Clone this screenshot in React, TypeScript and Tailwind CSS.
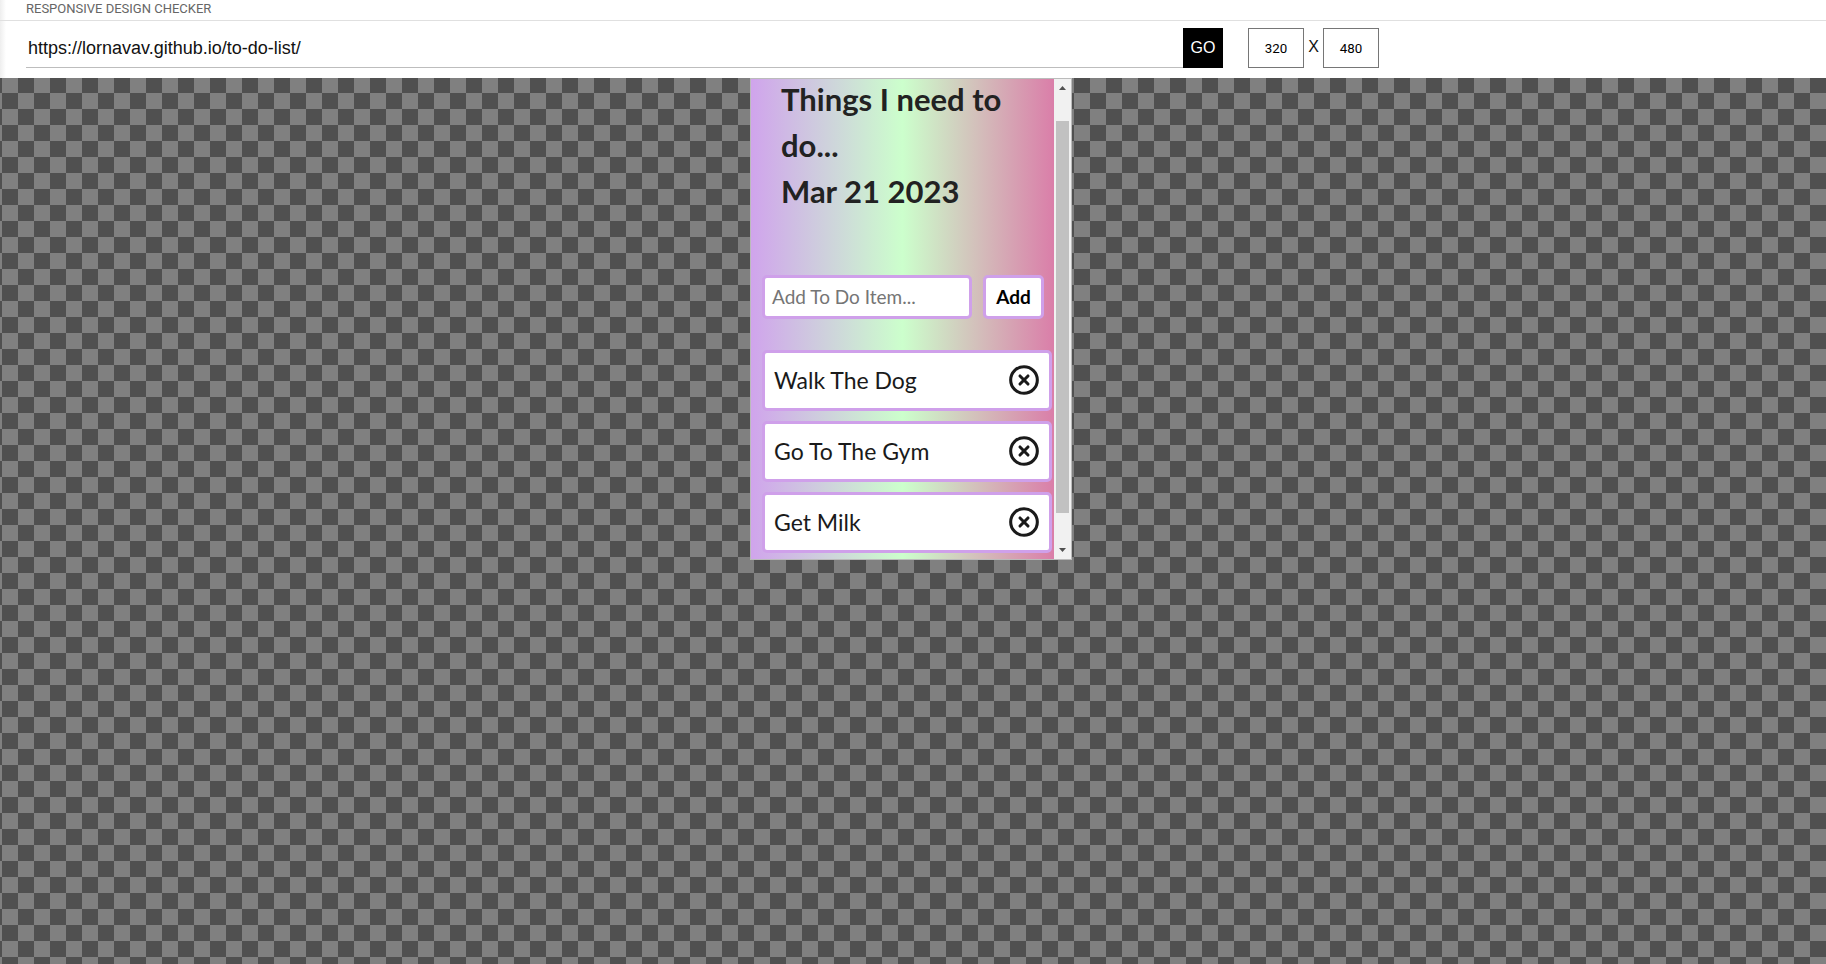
import { CircleX } from "lucide-react";

const items = ["Walk The Dog", "Go To The Gym", "Get Milk"];

function Arrow({ down }: { down?: boolean }) {
  return (
    <svg width="7" height="4" viewBox="0 0 7 4" className="block">
      <path d={down ? "M0 0H7L3.5 4Z" : "M3.5 0L7 4H0Z"} fill="#505050" />
    </svg>
  );
}

export default function App() {
  return (
    <div className="flex h-[964px] flex-col overflow-hidden bg-white font-['Liberation_Sans',sans-serif]">
      <header className="h-[78px] shrink-0 bg-[linear-gradient(90deg,#eeeeee,#ffffff_6px)]">
        <div className="h-[21px] border-b border-[#e0e0e0] pl-[26px] font-['Roboto',sans-serif] text-[13px] leading-[17px] text-[#666666]">
          RESPONSIVE DESIGN CHECKER
        </div>
        <div className="flex items-start pl-[26px] pt-[7px]">
          <div className="h-[40px] w-[1157px] border-b border-[#bdbdbd] pl-[2px] text-[18px] leading-[40px] text-[#111111]">
            https://lornavav.github.io/to-do-list/
          </div>
          <div className="flex h-[40px] w-[40px] items-center justify-center bg-black text-[16px] text-white">GO</div>
          <div className="ml-[25px] flex h-[40px] w-[56px] items-center justify-center border border-[#767676] pt-[1px] font-['Roboto',sans-serif] text-[13.33px] text-black">320</div>
          <div className="flex h-[38px] w-[19px] items-center justify-center text-[16px] text-[#111111]">X</div>
          <div className="flex h-[40px] w-[56px] items-center justify-center border border-[#767676] pt-[1px] font-['Roboto',sans-serif] text-[13.33px] text-black">480</div>
        </div>
      </header>

      <main className="flex-1 bg-[repeating-conic-gradient(#505050_0_25%,#808080_0_50%)] bg-[length:32px_32px] bg-[position:2px_-1px] pl-[750px]">
        <div className="flex h-[482px] w-[322px] border border-[#bbbbbb]">
          <div className="w-[303px] overflow-hidden bg-[linear-gradient(90deg,#d0a4ec,#ccffcc_50%,#da7ea9)] font-['Lato',sans-serif]">
            <h1 className="-mt-[3px] pb-[61px] pl-[30px] pr-[10px] text-[31px] font-bold leading-[46px] text-[#222222]">
              <div>Things I need to</div>
              <div>do...</div>
              <div>Mar 21 2023</div>
            </h1>
            <div className="ml-[11px] flex h-[44px] gap-[11px]">
              <div className="flex w-[210px] items-center rounded-[5px] border-[3px] border-[#cfa0ea] bg-white pl-[7px] text-[19px] text-[#757575]">
                Add To Do Item...
              </div>
              <div className="flex w-[61px] items-center justify-center rounded-[5px] border-[3px] border-[#cfa0ea] bg-white text-[19px] font-bold text-black">
                Add
              </div>
            </div>
            <ul className="ml-[11px] mt-[31px] flex w-[290px] flex-col gap-[10px]">
              {items.map((t) => (
                <li
                  key={t}
                  className="flex h-[61px] shrink-0 items-center justify-between rounded-[5px] border-[3px] border-[#cfa0ea] bg-white pl-[9px] pr-[9px] text-[23px] text-[#1a1a1a]"
                >
                  <span>{t}</span>
                  <CircleX size={32} strokeWidth={2.3} color="#1a1a1a" className="mb-[2px]" />
                </li>
              ))}
            </ul>
          </div>
          <div className="flex w-[17px] flex-col bg-[#f1f1f1]">
            <div className="flex h-[17px] shrink-0 justify-center pt-[7px]">
              <Arrow />
            </div>
            <div className="flex-1 px-[2px] pb-[29px] pt-[25px]">
              <div className="h-full bg-[#c1c1c1]" />
            </div>
            <div className="flex h-[17px] shrink-0 justify-center pt-[6px]">
              <Arrow down />
            </div>
          </div>
        </div>
      </main>
    </div>
  );
}
